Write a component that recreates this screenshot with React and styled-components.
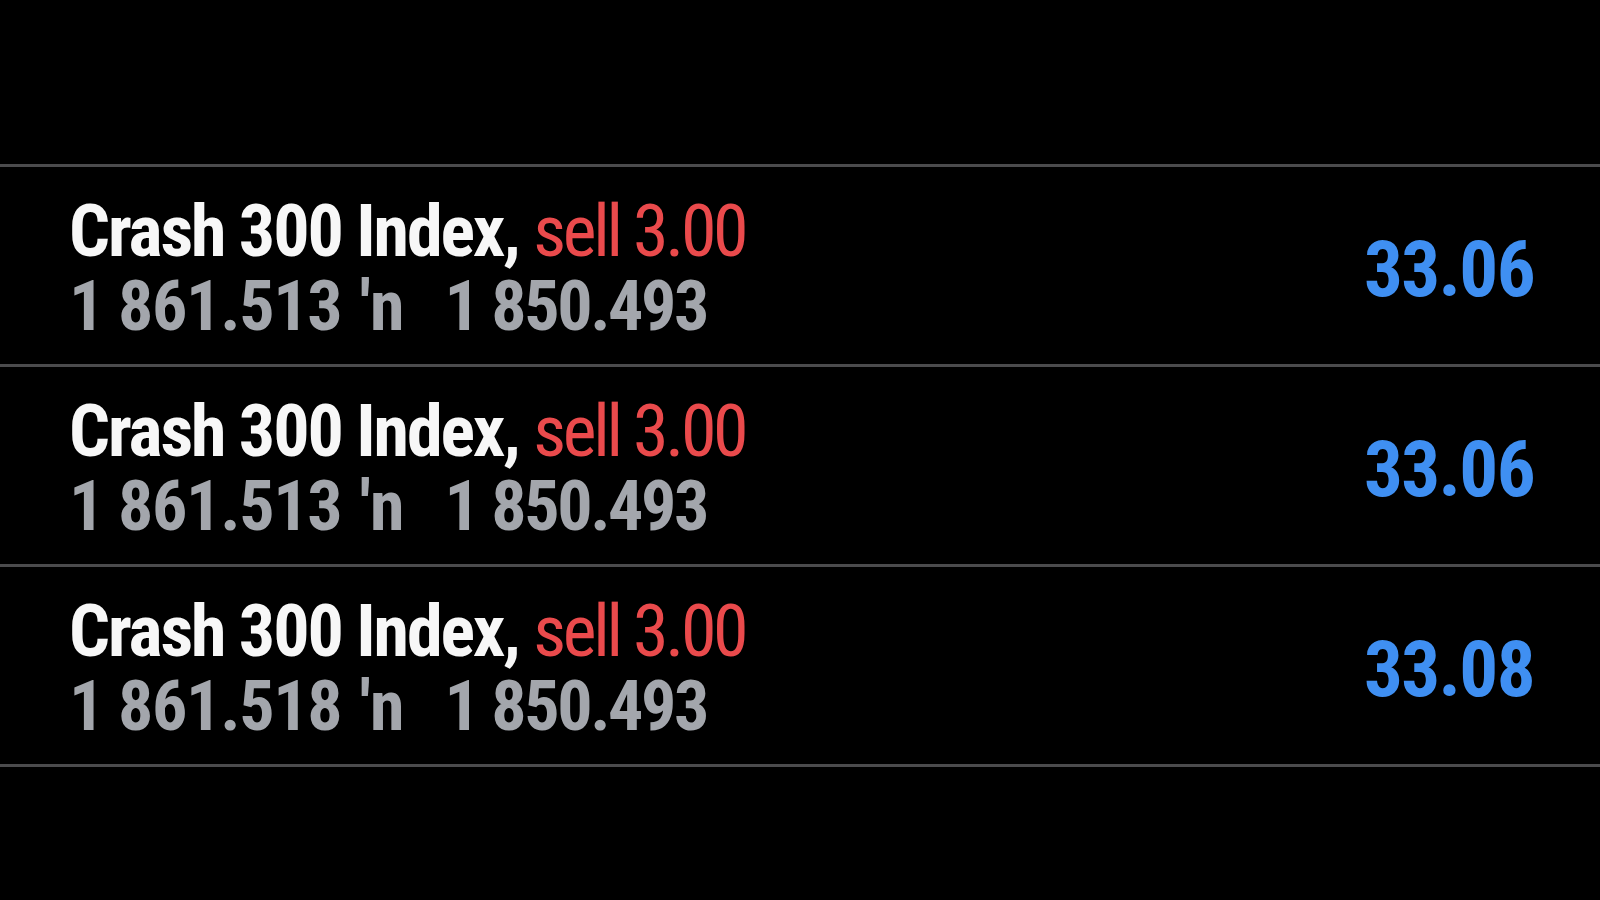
import styled, { createGlobalStyle } from 'styled-components';

const GlobalStyle = createGlobalStyle`
    html, body {
        margin: 0;
        padding: 0;
        background: #000;
    }
    body {
        font-family: 'Roboto Condensed', 'Liberation Sans Narrow', 'Roboto', sans-serif;
    }
`;

const Page = styled.div`
    width: 1600px;
    height: 900px;
    background: #000;
    padding-top: 164px;
    box-sizing: border-box;
    overflow: hidden;
`;

const List = styled.div`
    display: flex;
    flex-direction: column;
    border-top: 3px solid #4b4b4d;
`;

const Row = styled.div`
    height: 197px;
    display: flex;
    align-items: center;
    justify-content: space-between;
    padding: 0 66px 0 69px;
    border-bottom: 3px solid #4b4b4d;
`;

const Info = styled.div`
    display: flex;
    flex-direction: column;
    padding-top: 6px;
`;

const Title = styled.div`
    font-size: 72px;
    line-height: 74px;
    font-weight: 700;
    letter-spacing: -2.1px;
    color: #f7f7f7;
    white-space: nowrap;
`;

const Side = styled.span`
    font-weight: 400;
    letter-spacing: -3.3px;
    color: #ea4a4c;
`;

const Prices = styled.div`
    display: flex;
    align-items: baseline;
    font-size: 70px;
    line-height: 74px;
    font-weight: 700;
    color: #a3a6ac;
    white-space: pre;
`;

const Price = styled.span`
    letter-spacing: ${(p) => p.$spacing}px;
`;

const Arrow = styled.span`
    margin: 0 40px 0 18px;
    font-weight: 700;
    letter-spacing: 0;
`;

const Profit = styled.div`
    font-size: 77px;
    font-weight: 700;
    letter-spacing: -1.6px;
    padding-top: 8px;
    color: #3f8ff2;
`;

const deals = [
    { open: '1 861.513', close: '1 850.493', profit: '33.06' },
    { open: '1 861.513', close: '1 850.493', profit: '33.06' },
    { open: '1 861.518', close: '1 850.493', profit: '33.08' },
];

function App() {
    return (
        <>
            <GlobalStyle />
            <Page>
                <List>
                    {deals.map((d, i) => (
                        <Row key={i}>
                            <Info>
                                <Title>
                                    Crash 300 Index, <Side>sell 3.00</Side>
                                </Title>
                                <Prices>
                                    <Price $spacing={-1.3}>{d.open}</Price>
                                    <Arrow>′n</Arrow>
                                    <Price $spacing={-2.4}>{d.close}</Price>
                                </Prices>
                            </Info>
                            <Profit>{d.profit}</Profit>
                        </Row>
                    ))}
                </List>
            </Page>
        </>
    );
}

export default App;
